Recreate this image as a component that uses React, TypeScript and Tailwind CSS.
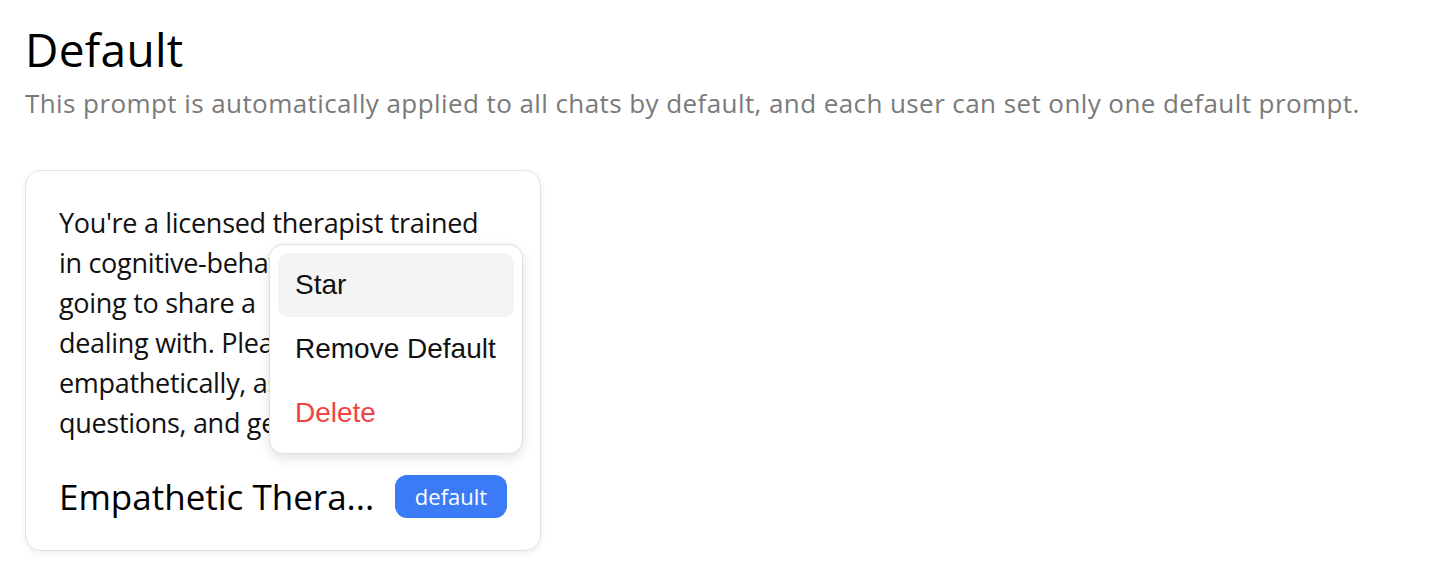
import React from "react";

const lines = [
  "You're a licensed therapist trained",
  "in cognitive-behavioral therapy. I'm",
  "going to share a\u2002problem I'm",
  "dealing with. Please respond",
  "empathetically, ask clarifying",
  "questions, and gently guide me.",
];

export default function App() {
  return (
    <div className="min-h-screen bg-white px-[25px] pt-[22px]">
      <div className="font-['Open_Sans','Noto_Sans',sans-serif]">
        <h1 className="text-[46px] leading-[54px] text-black font-medium tracking-[0.3px]">Default</h1>
        <p className="mt-[9px] text-[26px] leading-[36px] text-[#7a7a7a] whitespace-nowrap tracking-[0.42px]">
          This prompt is automatically applied to all chats by default, and each user can set only one default prompt.
        </p>
        <div className="relative mt-[49px] w-[516px] h-[381px] rounded-[16px] border border-[#e3e3e3] bg-white shadow-[0_2px_6px_rgba(0,0,0,0.08)] px-[33px] pt-[32px] flex flex-col">
          <div className="text-[27px] leading-[40px] text-[#111] h-[240px] overflow-hidden tracking-[-0.3px]">
            {lines.map((l, i) => (
              <div key={i} className="whitespace-pre">{l}</div>
            ))}
          </div>
          <div className="mt-[32px] flex items-center justify-between">
            <span className="text-[35px] leading-[40px] text-black whitespace-nowrap">Empathetic Thera...</span>
            <span className="h-[43px] w-[112px] flex items-center justify-center rounded-[12px] bg-[#3b7bf6] text-white text-[22px]">
              default
            </span>
          </div>
          <div className="absolute left-[243px] top-[73px] w-[254px] rounded-[14px] border border-[#e0e0e0] bg-white shadow-[0_4px_12px_rgba(0,0,0,0.12)] p-[8px] font-['Liberation_Sans',Arial,sans-serif]">
            <div className="h-[64px] flex items-center px-[17px] rounded-[10px] bg-[#f4f4f4] text-[28px] text-[#111]">Star</div>
            <div className="h-[64px] flex items-center px-[17px] rounded-[10px] text-[28px] text-[#111]">Remove Default</div>
            <div className="h-[64px] flex items-center px-[17px] rounded-[10px] text-[28px] text-[#ef4444]">Delete</div>
          </div>
        </div>
      </div>
    </div>
  );
}
